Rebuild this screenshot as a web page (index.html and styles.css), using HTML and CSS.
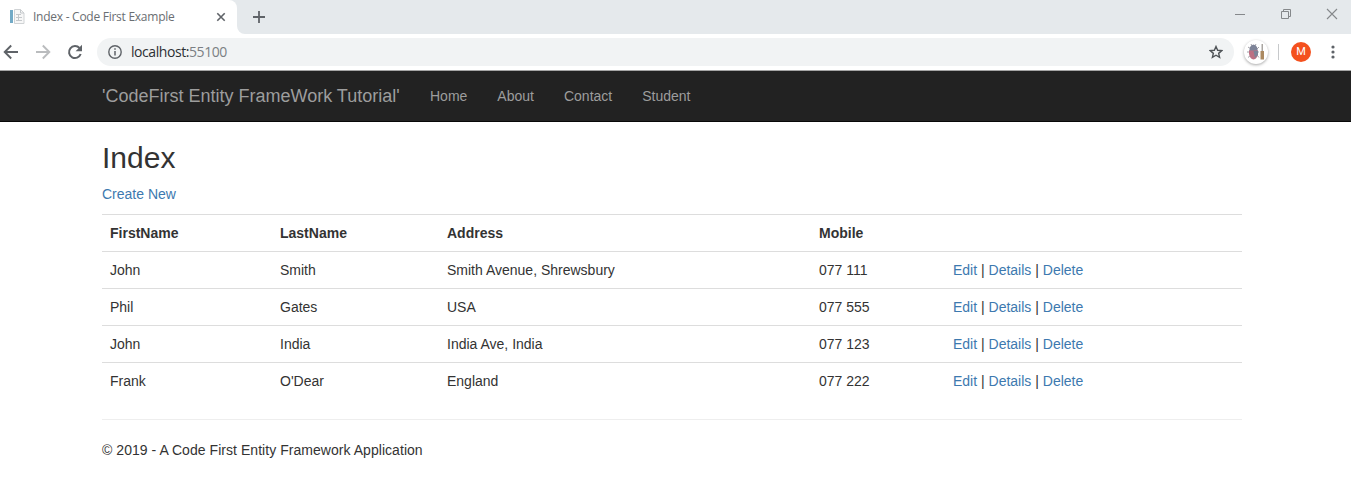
FILE: index.html
```
<!DOCTYPE html>
<html lang="en">
<head>
<meta charset="utf-8">
<title>Index - Code First Example</title>
<link rel="stylesheet" href="styles.css">
</head>
<body>
<div class="tabstrip">
  <div class="tab">
    <svg class="favicon" width="16" height="16" viewBox="0 0 16 16"><path fill="#72aac6" d="M1 1h3v13H1z"/><path fill="#f7f7f7" stroke="#d0d3d5" d="M5.500.5h6l3.500 3.500v10.500H5.500z"/><path fill="none" stroke="#c4c8cb" d="M11.500.5V4H15M7 5.500h5M7 8.500h6M7 11.500h6M9.500 5v7"/></svg>
    <span class="tab-title">Index - Code First Example</span>
    <svg class="tab-close" width="10" height="10" viewBox="0 0 10 10"><path d="M1.300 1.300l7.400 7.400M8.700 1.300L1.300 8.700" stroke="#5f6368" stroke-width="1.600"/></svg>
  </div>
  <svg class="tab-curve" width="8" height="8" viewBox="0 0 8 8"><path fill="#fff" d="M0 0a8 8 0 0 0 8 8H0z"/></svg>
  <svg class="new-tab" width="12" height="12" viewBox="0 0 12 12"><path d="M6 0v12M0 6h12" stroke="#5f6368" stroke-width="1.800"/></svg>
  <div class="window-buttons">
    <svg width="12" height="12" viewBox="0 0 12 12"><path d="M1 6.500h10" stroke="#85888b"/></svg>
    <svg width="12" height="12" viewBox="0 0 12 12"><path fill="none" stroke="#85888b" d="M1.500 3.500h7v7h-7zM3.500 3V1.500h7v7H9"/></svg>
    <svg width="12" height="12" viewBox="0 0 12 12"><path d="M1 1l10 10M11 1L1 11" stroke="#85888b" stroke-width="1.100"/></svg>
  </div>
</div>
<div class="toolbar">
  <svg class="back" width="16" height="16" viewBox="0 0 16 16"><path fill="none" stroke="#5f6368" stroke-width="1.900" d="M15 8H2M8.200 1.500L1.700 8l6.500 6.500"/></svg>
  <svg class="forward" width="16" height="16" viewBox="0 0 16 16"><path fill="none" stroke="#babcbe" stroke-width="1.900" d="M1 8h13M7.800 1.500L14.300 8l-6.500 6.500"/></svg>
  <svg class="reload" width="16" height="16" viewBox="0 0 16 16"><path fill="none" stroke="#5f6368" stroke-width="2" d="M13.700 10A6 6 0 1 1 12.500 4"/><path fill="#5f6368" d="M15 .8v6.400H8.600z"/></svg>
  <div class="omnibox">
    <svg class="info" width="14" height="14" viewBox="0 0 14 14"><circle cx="7" cy="7" r="6.200" fill="none" stroke="#5f6368" stroke-width="1.400"/><path fill="#5f6368" d="M6.250 6h1.500v4.500h-1.500zM6.250 3.300h1.500v1.500h-1.500z"/></svg>
    <span class="url">localhost:<span class="port">55100</span></span>
    <svg class="star" width="14" height="14" viewBox="0 0 14 14"><path fill="none" stroke="#4f5357" stroke-width="1.400" d="M7 1.500l1.650 3.750 4.100.4-3.100 2.700.95 4L7 10.250l-3.600 2.100.95-4-3.100-2.700 4.100-.4z"/></svg>
  </div>
  <div class="extension">
    <svg width="18" height="18" viewBox="0 0 18 18"><path fill="none" stroke="#a3a1a8" d="M1 4l3 2M0 9h4M1 14.500l3-2.500M10 6l2-2M10 9h2M10 12l2 2.500M4 1l1 2M9 1L8 3"/><path fill="#7d8398" d="M3 4Q6.500-1 10 4l.8 4H2.200z"/><path fill="#bd6f83" d="M2 7.500h9v3.300Q10 16.500 6.500 16.500T2 10.800z"/><path fill="#7d8398" d="M6.500 8H11v3.500L8 15z"/><path fill="#a9a5a1" d="M14.500 1h1.500v7h-1.500z"/><path fill="#ab8960" d="M13.500 8h3.500v8.500h-3.500z"/></svg>
  </div>
  <div class="divider"></div>
  <div class="avatar">M</div>
  <svg class="menu" width="4" height="14" viewBox="0 0 4 14"><g fill="#5f6368"><circle cx="2" cy="2" r="1.600"/><circle cx="2" cy="7" r="1.600"/><circle cx="2" cy="12" r="1.600"/></g></svg>
</div>
<nav class="navbar">
  <a class="brand">'CodeFirst Entity FrameWork Tutorial'</a>
  <a class="nav-link">Home</a>
  <a class="nav-link">About</a>
  <a class="nav-link">Contact</a>
  <a class="nav-link">Student</a>
</nav>
<main class="content">
  <h2 class="heading">Index</h2>
  <p class="create"><a class="link">Create New</a></p>
  <table class="table">
    <colgroup><col class="col-first"><col class="col-last"><col class="col-address"><col class="col-mobile"><col></colgroup>
    <tr><th>FirstName</th><th>LastName</th><th>Address</th><th>Mobile</th><th></th></tr>
    <tr><td>John</td><td>Smith</td><td>Smith Avenue, Shrewsbury</td><td>077 111</td><td><a class="link">Edit</a> | <a class="link">Details</a> | <a class="link">Delete</a></td></tr>
    <tr><td>Phil</td><td>Gates</td><td>USA</td><td>077 555</td><td><a class="link">Edit</a> | <a class="link">Details</a> | <a class="link">Delete</a></td></tr>
    <tr><td>John</td><td>India</td><td>India Ave, India</td><td>077 123</td><td><a class="link">Edit</a> | <a class="link">Details</a> | <a class="link">Delete</a></td></tr>
    <tr><td>Frank</td><td>O'Dear</td><td>England</td><td>077 222</td><td><a class="link">Edit</a> | <a class="link">Details</a> | <a class="link">Delete</a></td></tr>
  </table>
  <hr class="rule">
  <footer class="footer">© 2019 - A Code First Entity Framework Application</footer>
</main>
</body>
</html>
```
FILE: styles.css
```
* { box-sizing: border-box; }
body {
  margin: 0;
  height: 480px;
  overflow: hidden;
  background: #fff;
  color: #333;
  font: 14px/20px "Liberation Sans", Arial, sans-serif;
}
svg { display: block; flex: none; }
.tabstrip {
  display: flex;
  height: 34px;
  background: #e5e9ec;
}
.tab {
  display: flex;
  align-items: center;
  width: 237px;
  padding-left: 9px;
  background: #fff;
  border-radius: 0 8px 0 0;
}
.tab-title {
  width: 174px;
  margin-left: 8px;
  color: #6a6e72;
  font: 12px/16px "Open Sans", sans-serif;
  letter-spacing: -0.26px;
  white-space: nowrap;
}
.tab-close { margin-left: 9px; }
.tab-curve { align-self: flex-end; }
.new-tab { margin: 11px 0 0 8px; }
.window-buttons {
  display: flex;
  gap: 34px;
  margin: 8px 13px 0 auto;
}
.toolbar {
  display: flex;
  align-items: center;
  height: 37px;
  padding: 0 16px 0 3px;
  border-bottom: 1px solid #a5a5a5;
}
.forward { margin-left: 16px; }
.reload { margin-left: 16px; }
.omnibox {
  display: flex;
  align-items: center;
  width: 1137px;
  height: 28px;
  margin-left: 14px;
  padding: 0 11px;
  border-radius: 14px;
  background: #f1f3f4;
}
.url {
  margin-left: 9px;
  color: #2c2f33;
  font: 14px/20px "Open Sans", sans-serif;
  letter-spacing: -0.43px;
}
.port { color: #7b7f83; }
.star { margin-left: auto; }
.extension {
  display: flex;
  align-items: center;
  justify-content: center;
  width: 24px;
  height: 24px;
  margin-left: 10px;
  border-radius: 50%;
  background: #fff;
  box-shadow: 0 1px 3px rgba(0, 0, 0, 0.35);
}
.divider {
  width: 1px;
  height: 16px;
  margin: 0 12px 0 10px;
  background: #c7c9cb;
}
.avatar {
  width: 20px;
  height: 20px;
  border-radius: 50%;
  background: #f4511e;
  color: #fff;
  font: 400 11px/20px Roboto, sans-serif;
  text-align: center;
}
.menu { margin-left: auto; }
.navbar {
  display: flex;
  height: 51px;
  padding-left: 102px;
  border-bottom: 1px solid #080808;
  background: #222;
  color: #9d9d9d;
}
.brand {
  width: 313px;
  padding-top: 15px;
  font-size: 18px;
  white-space: nowrap;
}
.nav-link { padding: 15px; }
.content {
  width: 1140px;
  margin-left: 102px;
}
.heading {
  margin: 19px 0 10px;
  font-size: 30px;
  line-height: 33px;
  font-weight: 400;
}
.create { margin: 0 0 10px; }
.link { color: #3d79af; }
.table {
  width: 1140px;
  table-layout: fixed;
  border-collapse: separate;
  border-spacing: 0;
}
.table th, .table td {
  height: 37px;
  padding: 8px;
  border-top: 1px solid #ddd;
  text-align: left;
}
.col-first { width: 170px; }
.col-last { width: 167px; }
.col-address { width: 372px; }
.col-mobile { width: 134px; }
.rule {
  margin: 20px 0;
  border: 0;
  border-top: 1px solid #eee;
}
.footer { letter-spacing: 0.045px; }
```
